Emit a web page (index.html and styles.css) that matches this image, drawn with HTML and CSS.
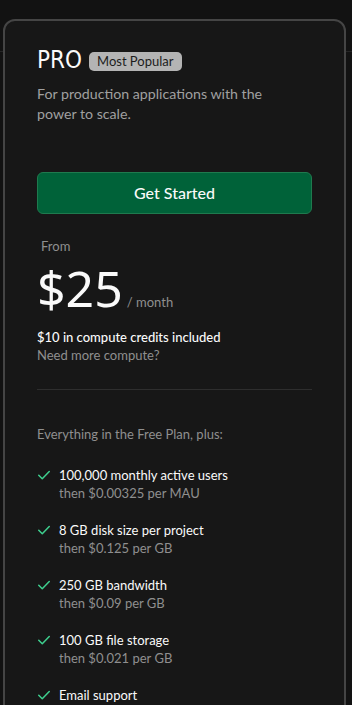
FILE: index.html
```html
<!DOCTYPE html>
<html lang="en">
<head>
    <meta charset="UTF-8">
    <meta name="viewport" content="width=device-width, initial-scale=1.0">
    <title>Pricing - Pro</title>
    <link rel="stylesheet" href="styles.css">
</head>
<body>
    <div class="plan-card">
        <div class="plan-header">
            <h3 class="plan-name">PRO</h3>
            <span class="badge">Most Popular</span>
        </div>
        <p class="plan-desc">For production applications with the power to scale.</p>

        <a href="#" class="cta">Get Started</a>

        <div class="price-block">
            <div class="price-from">From</div>
            <div class="price-row">
                <span class="price">$25</span>
                <span class="price-period">/ month</span>
            </div>
            <div class="credits">$10 in compute credits included</div>
            <a href="#" class="more-compute">Need more compute?</a>
        </div>

        <hr class="divider">

        <p class="features-intro">Everything in the Free Plan, plus:</p>

        <ul class="features">
            <li>
                <svg class="check" viewBox="0 0 24 24"><path d="M3 12.5l6 6L21 6"/></svg>
                <div>
                    <div class="feat-title">100,000 monthly active users</div>
                    <div class="feat-sub">then $0.00325 per MAU</div>
                </div>
            </li>
            <li>
                <svg class="check" viewBox="0 0 24 24"><path d="M3 12.5l6 6L21 6"/></svg>
                <div>
                    <div class="feat-title">8 GB disk size per project</div>
                    <div class="feat-sub">then $0.125 per GB</div>
                </div>
            </li>
            <li>
                <svg class="check" viewBox="0 0 24 24"><path d="M3 12.5l6 6L21 6"/></svg>
                <div>
                    <div class="feat-title">250 GB bandwidth</div>
                    <div class="feat-sub">then $0.09 per GB</div>
                </div>
            </li>
            <li>
                <svg class="check" viewBox="0 0 24 24"><path d="M3 12.5l6 6L21 6"/></svg>
                <div>
                    <div class="feat-title">100 GB file storage</div>
                    <div class="feat-sub">then $0.021 per GB</div>
                </div>
            </li>
            <li>
                <svg class="check" viewBox="0 0 24 24"><path d="M3 12.5l6 6L21 6"/></svg>
                <div>
                    <div class="feat-title">Email support</div>
                </div>
            </li>
        </ul>
    </div>
</body>
</html>
```

FILE: styles.css
```css
* {
    margin: 0;
    padding: 0;
    box-sizing: border-box;
}

body {
    font-family: Lato, "Noto Sans", sans-serif;
    background: #121212 linear-gradient(#262626, #262626) 0 51px / 100% 1px no-repeat;
    color: #ededed;
    padding: 19px 6px 0 3px;
    height: 705px;
    overflow: hidden;
}

.plan-card {
    background: #171717;
    border: 2px solid #454545;
    border-radius: 12px;
    padding: 23px 32px 40px;
}

.plan-header {
    display: flex;
    align-items: center;
    gap: 7px;
}

.plan-name {
    font-family: "DejaVu Sans Condensed", "Liberation Sans Narrow", sans-serif;
    font-weight: normal;
    font-size: 24px;
    line-height: 32px;
    color: #fafafa;
}

.badge {
    background: #b4b4b4;
    color: #1c1c1c;
    font-size: 13px;
    line-height: 19px;
    padding: 0 8px;
    border-radius: 5px;
    margin-top: 2px;
}

.plan-desc {
    font-size: 14.2px;
    line-height: 20px;
    color: #a0a0a0;
    margin-top: 8px;
    max-width: 250px;
}

.cta {
    display: block;
    margin-top: 48px;
    height: 42px;
    line-height: 40px;
    text-align: center;
    background: #006239;
    border: 1px solid #1f7a4e;
    border-radius: 6px;
    color: #fafafa;
    font-size: 16px;
    font-weight: 500;
    text-decoration: none;
}

.price-block {
    margin-top: 22px;
}

.price-from {
    font-size: 13px;
    color: #8f8f8f;
    padding-left: 4px;
    line-height: 20px;
}

.price-row {
    display: flex;
    align-items: baseline;
    gap: 4px;
}

.price {
    font-family: "Noto Sans", sans-serif;
    font-size: 50px;
    line-height: 64px;
    color: #fafafa;
}

.price-period {
    font-size: 13px;
    color: #8f8f8f;
}

.credits {
    margin-top: 8px;
    font-size: 13px;
    line-height: 18px;
    color: #fafafa;
    font-weight: 500;
}

.more-compute {
    display: block;
    font-size: 13px;
    line-height: 18px;
    color: #8f8f8f;
    text-decoration: none;
}

.divider {
    border: none;
    border-top: 1px solid #2e2e2e;
    margin-top: 25px;
}

.features-intro {
    margin-top: 34px;
    font-size: 13px;
    line-height: 20px;
    color: #8f8f8f;
}

.features {
    list-style: none;
    margin-top: 22px;
    display: flex;
    flex-direction: column;
    gap: 18px;
}

.features li {
    display: flex;
    gap: 8px;
}

.check {
    width: 14px;
    height: 14px;
    margin-top: 2px;
    flex-shrink: 0;
    fill: none;
    stroke: #3ecf8e;
    stroke-width: 2.6;
    stroke-linecap: round;
    stroke-linejoin: round;
}

.feat-title {
    font-size: 13px;
    line-height: 18px;
    color: #fafafa;
}

.feat-sub {
    font-size: 13px;
    line-height: 19px;
    color: #8f8f8f;
}
```
